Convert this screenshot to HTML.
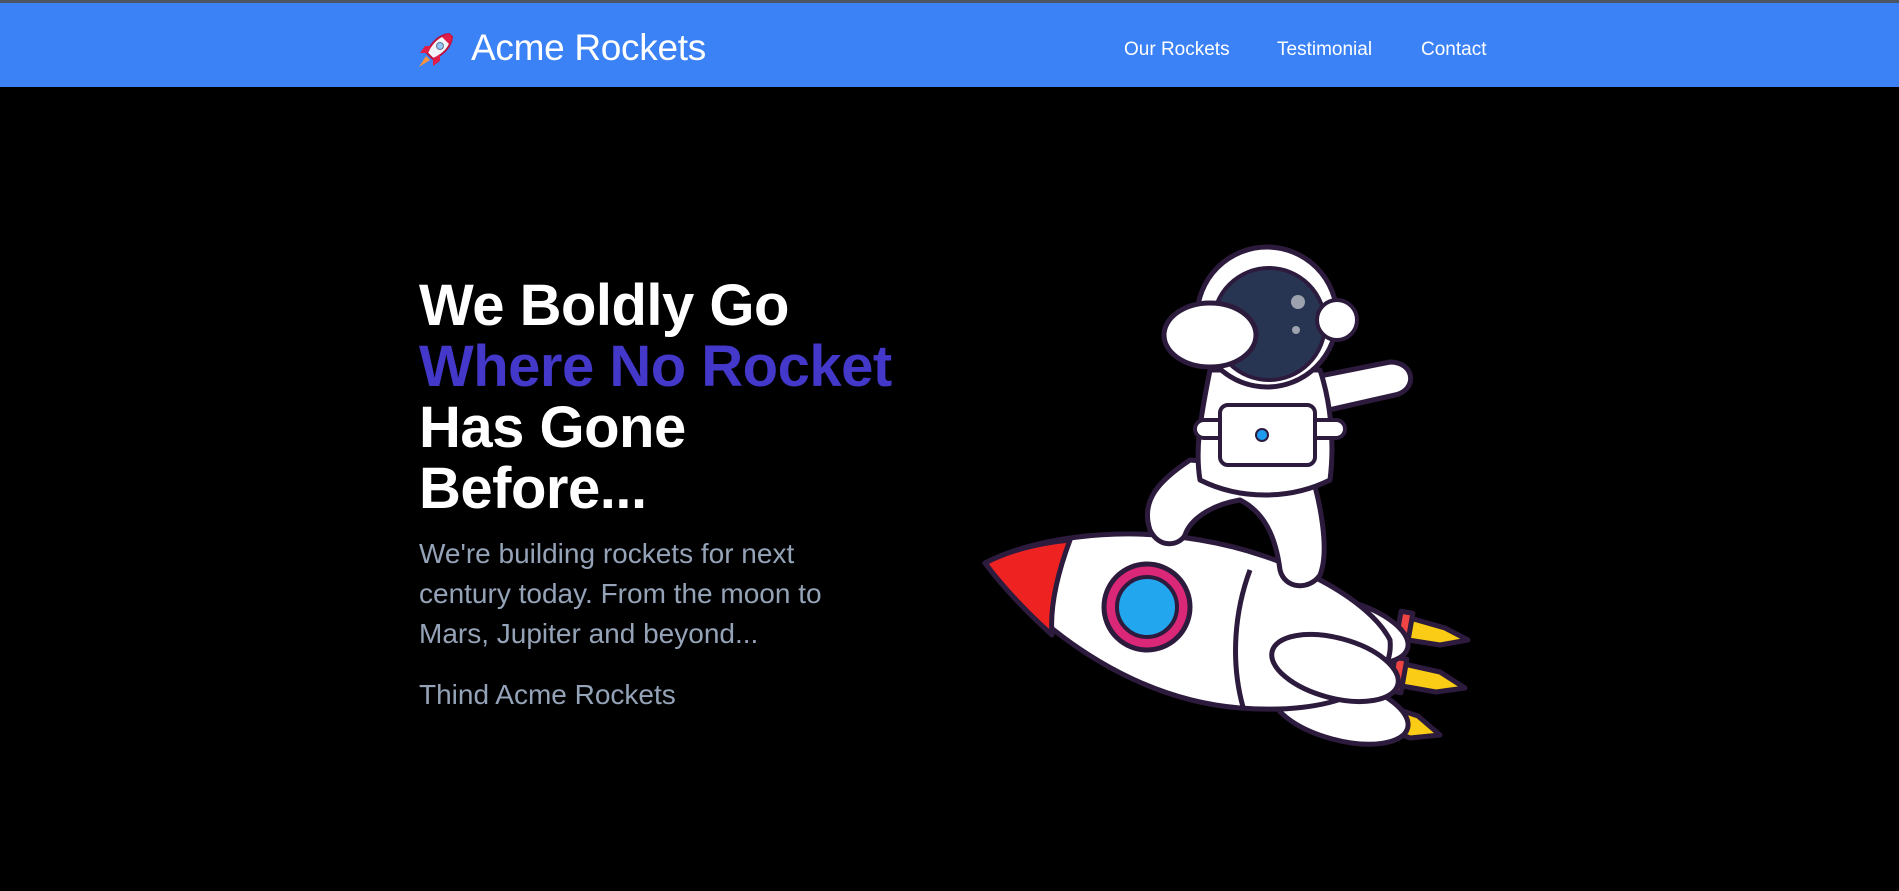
<!DOCTYPE html>
<html><head><meta charset="utf-8"><style>
*{margin:0;padding:0;box-sizing:border-box}
html,body{width:1899px;height:891px;background:#000;overflow:hidden;font-family:"Liberation Sans",sans-serif}
.top{height:3px;background:#4b5563}
header{height:84px;background:#3b82f6;position:relative}
.logo{position:absolute;left:415px;top:28px}
.brand{position:absolute;left:471px;top:24px;color:#fff;font-size:37px;letter-spacing:-0.3px}
nav a{position:absolute;top:36px;color:#fff;font-size:19px;text-decoration:none}
h1{position:absolute;left:419px;top:275px;font-size:58px;line-height:61px;color:#fff;font-weight:bold;letter-spacing:-0.5px}
h1 span{color:#4338ca}
p{position:absolute;left:419px;color:#94a3b8;font-size:28px;line-height:40px}
svg.art{position:absolute;left:0;top:0}
</style></head><body>
<div class="top"></div>
<header>
<svg class="logo" width="40" height="40" viewBox="0 0 40 40">
<path d="M34 3 C24 4 16 12 12 22 L18 28 C28 24 36 16 37 6 Z" fill="#f1f5f9" stroke="#be123c" stroke-width="2"/>
<path d="M34 3 C31 3 28 5 27 6 L34 13 C36 11 37 8 37 6Z" fill="#e11d48"/>
<circle cx="25" cy="15" r="3.5" fill="#93c5fd" stroke="#64748b"/>
<path d="M12 22 L5 22 L10 15 L17 15Z M18 28 L18 35 L25 30 L25 23Z" fill="#e11d48"/>
<path d="M11 25 L4 36 L15 29Z" fill="#fb923c"/>
</svg>
<div class="brand">Acme Rockets</div>
<nav><a style="left:1124px">Our Rockets</a><a style="left:1277px">Testimonial</a><a style="left:1421px">Contact</a></nav>
</header>
<h1>We Boldly Go<br><span>Where No Rocket</span><br>Has Gone<br>Before...</h1>
<p style="top:534px">We're building rockets for next<br>century today. From the moon to<br>Mars, Jupiter and beyond...</p>
<p style="top:675px">Thind Acme Rockets</p>
<svg class="art" width="1899" height="891" viewBox="0 0 1899 891">
<g stroke="#2d1b3d" stroke-width="5" stroke-linejoin="round">
<path d="M1410 618 L1445 628 L1468 640 L1440 645 L1408 640Z" fill="#facc15"/>
<path d="M1404 664 L1440 672 L1465 688 L1436 692 L1402 686Z" fill="#facc15"/>
<path d="M1388 706 L1418 716 L1440 735 L1410 738 L1385 728Z" fill="#facc15"/>
<rect x="1398" y="612" width="12" height="34" fill="#ef4444" transform="rotate(10 1404 629)"/>
<rect x="1392" y="658" width="12" height="34" fill="#ef4444" transform="rotate(10 1398 675)"/>
<rect x="1376" y="700" width="12" height="32" fill="#ef4444" transform="rotate(10 1382 716)"/>
<ellipse cx="1340" cy="630" rx="70" ry="30" fill="#fff" transform="rotate(15 1340 630)"/>
<ellipse cx="1340" cy="710" rx="70" ry="30" fill="#fff" transform="rotate(15 1340 710)"/>
<path d="M985 563 C1030 540 1110 525 1200 540 C1290 555 1370 600 1390 640 C1395 690 1330 715 1240 708 C1140 700 1050 640 985 563Z" fill="#fff"/>
<path d="M985 563 C1010 550 1040 543 1070 540 C1055 580 1050 610 1052 635 C1030 615 1005 590 985 563Z" fill="#ef2222"/>
<path d="M1250 570 C1235 610 1230 660 1243 707" fill="none"/>
<ellipse cx="1335" cy="668" rx="65" ry="30" fill="#fff" transform="rotate(15 1335 668)"/>
<circle cx="1147" cy="607" r="43" fill="#db2777"/>
<circle cx="1147" cy="607" r="30" fill="#22a7ee" stroke-width="4"/>
<path d="M1190 460 C1160 480 1140 500 1150 530 C1160 550 1180 545 1185 535 C1190 520 1210 505 1240 500 C1260 510 1275 530 1280 570 C1285 590 1310 590 1320 575 C1330 550 1320 500 1310 470Z" fill="#fff"/>
<path d="M1300 380 L1390 362 C1415 362 1418 390 1395 395 L1320 412Z" fill="#fff"/>
<path d="M1210 370 C1200 420 1195 450 1200 480 C1240 500 1290 500 1330 480 C1335 440 1330 400 1320 370Z" fill="#fff"/>
<rect x="1195" y="420" width="150" height="18" rx="9" fill="#fff" stroke-width="4"/>
<rect x="1220" y="405" width="95" height="60" rx="8" fill="#fff" stroke-width="4"/>
<circle cx="1262" cy="435" r="6" fill="#1d9bf0" stroke-width="2"/>
<circle cx="1267" cy="317" r="70" fill="#fff"/>
<circle cx="1269" cy="324" r="56" fill="#283552" stroke-width="4"/>
<circle cx="1298" cy="302" r="7" fill="#9ca3af" stroke="none"/>
<circle cx="1296" cy="330" r="4" fill="#9ca3af" stroke="none"/>
<circle cx="1337" cy="320" r="20" fill="#fff" stroke-width="4"/>
<ellipse cx="1210" cy="335" rx="46" ry="32" fill="#fff"/>
</g>
</svg>
</body></html>
